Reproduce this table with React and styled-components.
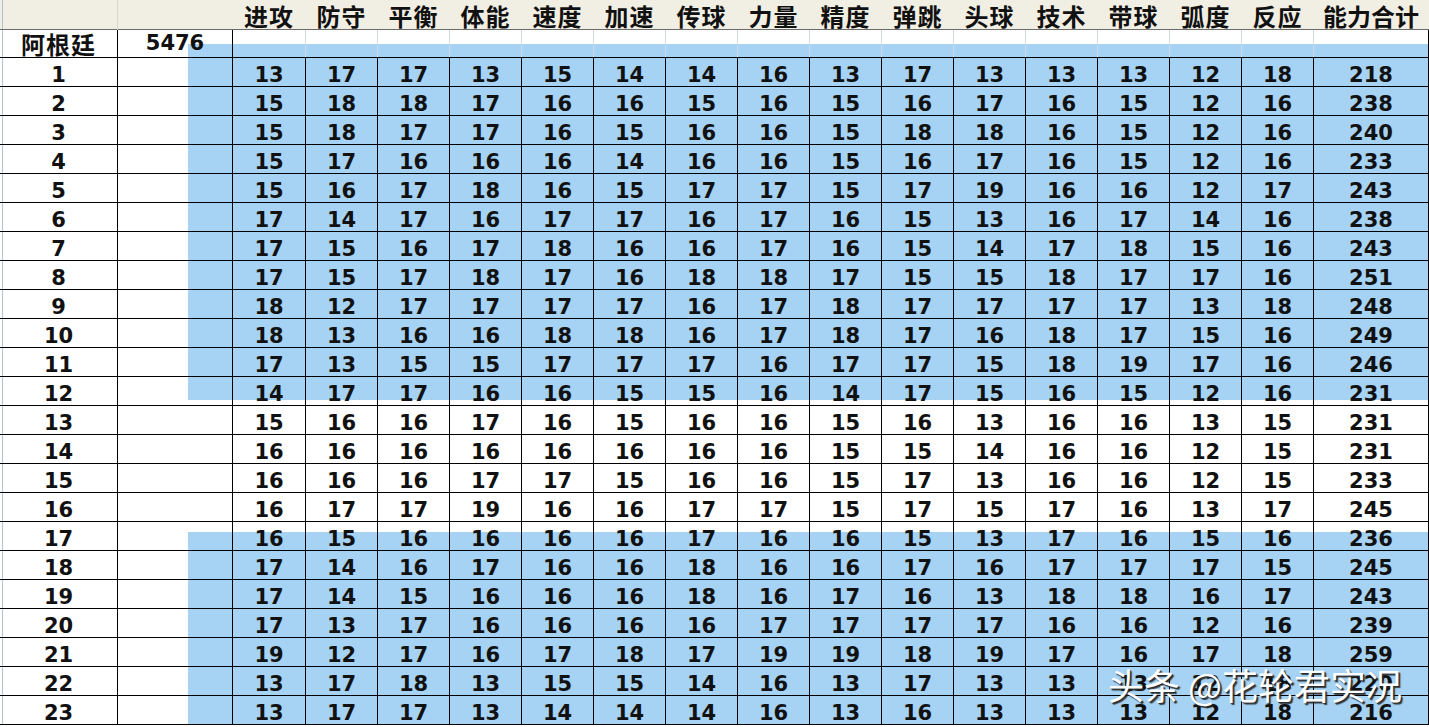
import React from "react";
import styled, { createGlobalStyle } from "styled-components";

const BLUE = "#a6d2f3";
const GRID = "#d3d9e3";
const COLS = "118px 115px 73px repeat(14, 72px) 115px";

const Global = createGlobalStyle`
  *, *::before, *::after { box-sizing: border-box; }
  html, body { margin: 0; padding: 0; background: #fff; overflow: hidden; }
`;

const Sheet = styled.div`
  position: relative;
  width: 1429px;
  height: 727px;
  overflow: hidden;
  background: #fff;
`;

const HeaderRow = styled.div`
  display: grid;
  grid-template-columns: ${COLS};
  height: 30px;
  background:
    linear-gradient(#b3c0d4, #b3c0d4) 2px 0 / 1px 100% no-repeat,
    #f1eee3;
  border-bottom: 1px solid #6a6a6a;
`;

const HeaderCell = styled.div`
  display: flex;
  align-items: center;
  justify-content: center;
  line-height: 29px;
  padding-top: 1px;
  font-family: "Noto Sans CJK SC", sans-serif;
  font-weight: 700;
  font-size: 24px;
  letter-spacing: ${(p) => (p.$wide ? "0px" : "1px")};
  color: #111;
  white-space: nowrap;
  border-right: 1px solid ${(p) => (p.$line ? "#d9d6cc" : "transparent")};
`;

const Row = styled.div`
  display: grid;
  grid-template-columns: ${COLS};
  height: ${(p) => p.$h}px;
  border-bottom: 1px solid #000;
  background: linear-gradient(#b3c0d4, #b3c0d4) 2px 0 / 1px 100% no-repeat;
`;

const Cell = styled.div`
  display: flex;
  align-items: center;
  justify-content: center;
  line-height: ${(p) => (p.$cjk ? "27px" : "1")};
  padding-top: ${(p) => p.$pt || 0}px;
  border-right: 1px solid ${(p) => (p.$soft ? GRID : "#000")};
  font-family: ${(p) =>
    p.$cjk ? '"Noto Sans CJK SC", sans-serif' : '"DejaVu Sans", sans-serif'};
  font-weight: 700;
  font-size: ${(p) => (p.$cjk ? 24 : 21)}px;
  letter-spacing: ${(p) => (p.$cjk ? "1px" : "0")};
  color: #111;
  white-space: nowrap;
  background: ${(p) =>
    p.$fill
      ? `linear-gradient(${BLUE}, ${BLUE}) right ${p.$fill.top}px / ${p.$fill.w} ${p.$fill.h} no-repeat`
      : "none"};
`;

const Watermark = styled.div`
  position: absolute;
  left: 1108px;
  top: 660px;
  line-height: 48px;
  font-family: "Noto Sans CJK SC", sans-serif;
  font-weight: 400;
  font-size: 36px;
  color: #fff;
  white-space: nowrap;
  text-shadow: 2px 2px 1px rgba(35, 35, 35, 0.85), 1px 1px 0 rgba(35, 35, 35, 0.7);
  pointer-events: none;
`;

const HEADERS = [
  "进攻", "防守", "平衡", "体能", "速度", "加速", "传球", "力量",
  "精度", "弹跳", "头球", "技术", "带球", "弧度", "反应", "能力合计",
];

const DATA = [
  [13, 17, 17, 13, 15, 14, 14, 16, 13, 17, 13, 13, 13, 12, 18, 218],
  [15, 18, 18, 17, 16, 16, 15, 16, 15, 16, 17, 16, 15, 12, 16, 238],
  [15, 18, 17, 17, 16, 15, 16, 16, 15, 18, 18, 16, 15, 12, 16, 240],
  [15, 17, 16, 16, 16, 14, 16, 16, 15, 16, 17, 16, 15, 12, 16, 233],
  [15, 16, 17, 18, 16, 15, 17, 17, 15, 17, 19, 16, 16, 12, 17, 243],
  [17, 14, 17, 16, 17, 17, 16, 17, 16, 15, 13, 16, 17, 14, 16, 238],
  [17, 15, 16, 17, 18, 16, 16, 17, 16, 15, 14, 17, 18, 15, 16, 243],
  [17, 15, 17, 18, 17, 16, 18, 18, 17, 15, 15, 18, 17, 17, 16, 251],
  [18, 12, 17, 17, 17, 17, 16, 17, 18, 17, 17, 17, 17, 13, 18, 248],
  [18, 13, 16, 16, 18, 18, 16, 17, 18, 17, 16, 18, 17, 15, 16, 249],
  [17, 13, 15, 15, 17, 17, 17, 16, 17, 17, 15, 18, 19, 17, 16, 246],
  [14, 17, 17, 16, 16, 15, 15, 16, 14, 17, 15, 16, 15, 12, 16, 231],
  [15, 16, 16, 17, 16, 15, 16, 16, 15, 16, 13, 16, 16, 13, 15, 231],
  [16, 16, 16, 16, 16, 16, 16, 16, 15, 15, 14, 16, 16, 12, 15, 231],
  [16, 16, 16, 17, 17, 15, 16, 16, 15, 17, 13, 16, 16, 12, 15, 233],
  [16, 17, 17, 19, 16, 16, 17, 17, 15, 17, 15, 17, 16, 13, 17, 245],
  [16, 15, 16, 16, 16, 16, 17, 16, 16, 15, 13, 17, 16, 15, 16, 236],
  [17, 14, 16, 17, 16, 16, 18, 16, 16, 17, 16, 17, 17, 17, 15, 245],
  [17, 14, 15, 16, 16, 16, 18, 16, 17, 16, 13, 18, 18, 16, 17, 243],
  [17, 13, 17, 16, 16, 16, 16, 17, 17, 17, 17, 16, 16, 12, 16, 239],
  [19, 12, 17, 16, 17, 18, 17, 19, 19, 18, 19, 17, 16, 17, 18, 259],
  [13, 17, 18, 13, 15, 15, 14, 16, 13, 17, 13, 13, 13, 12, 18, 220],
  [13, 17, 17, 13, 14, 14, 14, 16, 13, 16, 13, 13, 13, 12, 18, 216],
];

// vertical band of blue fill per data row (1-indexed)
function bandFor(n) {
  if (n >= 1 && n <= 11) return { top: 0, h: "100%" };
  if (n === 12) return { top: 0, h: "23px" };
  if (n === 17) return { top: 10, h: "100%" };
  if (n >= 18) return { top: 0, h: "100%" };
  return null;
}

const LAST = HEADERS.length - 1;

export default function App() {
  const teamBand = { top: 14, h: "100%" };
  return (
    <>
      <Global />
      <Sheet>
        <HeaderRow>
          <HeaderCell $line />
          <HeaderCell />
          {HEADERS.map((h) => (
            <HeaderCell key={h} $wide={h.length > 2}>
              {h}
            </HeaderCell>
          ))}
        </HeaderRow>

        <Row $h={28}>
          <Cell $cjk>阿根廷</Cell>
          <Cell $fill={{ ...teamBand, w: "44px" }}>5476</Cell>
          {HEADERS.map((h, j) => (
            <Cell key={h} $soft={j !== LAST} $fill={{ ...teamBand, w: "100%" }} />
          ))}
        </Row>

        {DATA.map((vals, i) => {
          const n = i + 1;
          const band = bandFor(n);
          return (
            <Row key={n} $h={29}>
              <Cell $pt={6}>{n}</Cell>
              <Cell $pt={6} $fill={band ? { ...band, w: "44px" } : null} />
              {vals.map((v, j) => (
                <Cell key={j} $pt={6} $fill={band ? { ...band, w: "100%" } : null}>
                  {v}
                </Cell>
              ))}
            </Row>
          );
        })}

        <Watermark>头条 @花轮君实况</Watermark>
      </Sheet>
    </>
  );
}
